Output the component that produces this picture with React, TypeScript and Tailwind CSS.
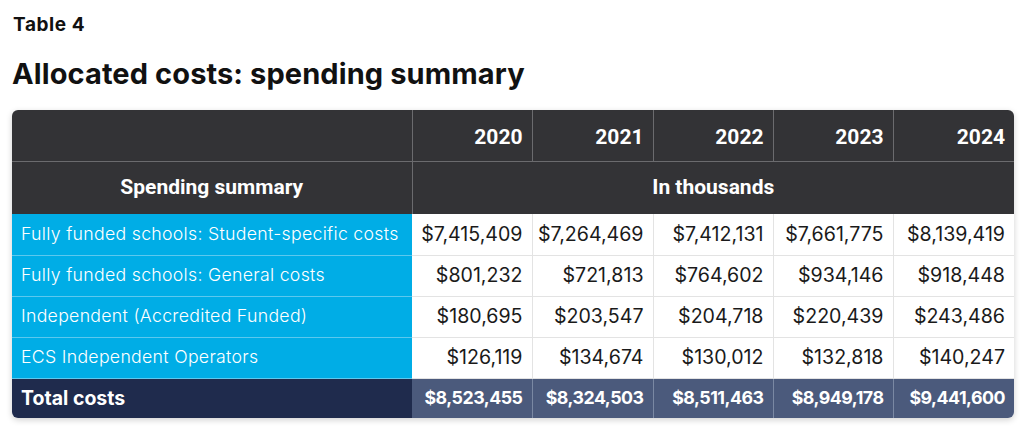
const years = ["2020", "2021", "2022", "2023", "2024"];

const rows = [
  { label: "Fully funded schools: Student-specific costs", values: ["$7,415,409", "$7,264,469", "$7,412,131", "$7,661,775", "$8,139,419"] },
  { label: "Fully funded schools: General costs", values: ["$801,232", "$721,813", "$764,602", "$934,146", "$918,448"] },
  { label: "Independent (Accredited Funded)", values: ["$180,695", "$203,547", "$204,718", "$220,439", "$243,486"] },
  { label: "ECS Independent Operators", values: ["$126,119", "$134,674", "$130,012", "$132,818", "$140,247"] },
];

const totals = ["$8,523,455", "$8,324,503", "$8,511,463", "$8,949,178", "$9,441,600"];

export default function App() {
  return (
    <div className="w-[1024px] h-[428px] bg-white overflow-hidden">
      <div className="pl-[13px] pt-[12px] text-[19px] font-bold text-[#111] leading-[26px] font-['Inter',sans-serif] tracking-[0.6px]">
        Table 4
      </div>
      <h1 className="pl-[12px] mt-[18px] text-[29px] font-bold text-[#111] leading-[36px] font-['Inter',sans-serif] tracking-[0.1px]">
        Allocated costs: spending summary
      </h1>
      <div className="mx-[12px] mt-[18px] w-[1002px] rounded-[6px] overflow-hidden shadow-[0_2px_6px_rgba(0,0,0,0.18)]">
        <table className="w-full border-collapse table-fixed font-['Roboto',sans-serif]">
          <colgroup>
            <col className="w-[400px]" />
            <col className="w-[120px]" />
            <col className="w-[121px]" />
            <col className="w-[120px]" />
            <col className="w-[120px]" />
            <col className="w-[121px]" />
          </colgroup>
          <thead>
            <tr className="h-[51px] bg-[#333336] text-white">
              <th className="border-r border-b border-[#6b6b6e]"></th>
              {years.map((y, i) => (
                <th
                  key={y}
                  className={`text-right pr-[9px] pt-[4px] text-[21px] font-bold border-b border-[#6b6b6e] ${i < 4 ? "border-r" : ""}`}
                >
                  {y}
                </th>
              ))}
            </tr>
            <tr className="h-[53px] bg-[#333336] text-white">
              <th className="text-center text-[21px] font-bold border-r border-[#6b6b6e]">Spending summary</th>
              <th colSpan={5} className="text-center text-[21px] font-bold">
                In thousands
              </th>
            </tr>
          </thead>
          <tbody className="font-['Inter',sans-serif]">
            {rows.map((r) => (
              <tr key={r.label} className="h-[41px]">
                <td className="bg-[#00ade6] text-white text-[17.7px] font-light pl-[9px] border-b border-[#5cc8ee] whitespace-nowrap tracking-[0.3px]">
                  {r.label}
                </td>
                {r.values.map((v, i) => (
                  <td
                    key={i}
                    className={`text-right pr-[9px] text-[19.6px] text-[#1a1a1a] border-b border-[#e3e3e3] ${i < 4 ? "border-r" : ""}`}
                  >
                    {v}
                  </td>
                ))}
              </tr>
            ))}
            <tr className="h-[40px]">
              <td className="bg-[#1f2b4d] text-white text-[19.5px] font-bold pl-[9px]">Total costs</td>
              {totals.map((v, i) => (
                <td
                  key={i}
                  className={`bg-[#4b5a7c] text-white text-right pr-[9px] text-[17.8px] font-bold tracking-[-0.5px] ${i < 4 ? "border-r border-[#7a88a3]" : ""}`}
                >
                  {v}
                </td>
              ))}
            </tr>
          </tbody>
        </table>
      </div>
    </div>
  );
}
